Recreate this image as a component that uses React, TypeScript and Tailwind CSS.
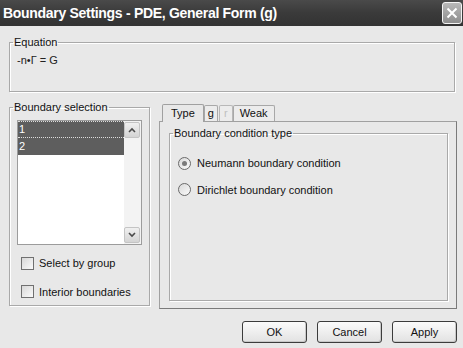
import React from "react";

const ui = { fontFamily: '"Liberation Sans", Arial, sans-serif' };

function Group({
  label,
  className,
  children,
}: {
  label: string;
  className?: string;
  children?: React.ReactNode;
}) {
  return (
    <fieldset
      className={`border border-[#a9a9a9] shadow-[1px_1px_0_#fff,inset_1px_1px_0_#fff] px-[7px] ${className ?? ""}`}
    >
      <legend className="ml-[-4px] px-[1px] text-[11px] leading-[13px] text-[#111]">
        {label}
      </legend>
      {children}
    </fieldset>
  );
}

function CheckBox({ label }: { label: string }) {
  return (
    <div className="flex items-center gap-[5px] text-[11px] text-[#111]">
      <span className="h-[13px] w-[13px] border border-[#707070] bg-gradient-to-br from-[#d8d8d8] to-[#fafafa]" />
      {label}
    </div>
  );
}

function Radio({ label, checked }: { label: string; checked?: boolean }) {
  return (
    <div className="flex items-center gap-[6px] text-[11px] text-[#111]">
      <span className="flex h-[13px] w-[13px] items-center justify-center rounded-full border border-[#6a6a6a] bg-gradient-to-br from-[#dadada] to-[#fafafa]">
        {checked && <span className="h-[5px] w-[5px] rounded-full bg-[#7a7a7a]" />}
      </span>
      {label}
    </div>
  );
}

function Btn({ label }: { label: string }) {
  return (
    <button className="h-[22px] w-[65px] rounded-[3px] border border-[#3c3c3c] bg-gradient-to-b from-[#fbfbfb] to-[#e2e2e2] text-[11px] text-[#111] shadow-[inset_-1px_-1px_0_#c8c8c8]">
      {label}
    </button>
  );
}

function ScrollArrow({ up }: { up?: boolean }) {
  return (
    <div className="flex h-[16px] w-[16px] items-center justify-center rounded-[2px] border border-[#c4c4c4] bg-gradient-to-b from-[#f0f0f0] to-[#d4d4d4]">
      <svg width="8" height="6" viewBox="0 0 8 6">
        <path
          d={up ? "M1 5 L4 2 L7 5" : "M1 1 L4 4 L7 1"}
          stroke="#4a4a4a"
          strokeWidth="1.6"
          fill="none"
        />
      </svg>
    </div>
  );
}

export default function App() {
  return (
    <div className="h-[348px] w-[463px] overflow-hidden bg-[#e8e8e8]" style={ui}>
      {/* title bar */}
      <div className="flex h-[26px] items-center justify-between bg-gradient-to-b from-[#4a4a4a] via-[#3a3a3a] to-[#333] pl-[3px] pr-[1px]">
        <span className="text-[14px] font-bold tracking-[-0.3px] text-white">
          Boundary Settings - PDE, General Form (g)
        </span>
        <div className="flex h-[22px] w-[20px] items-center justify-center rounded-[3px] border border-[#f4f4f4] bg-gradient-to-b from-[#b8b8b8] to-[#8e8e8e]">
          <svg width="12" height="12" viewBox="0 0 12 12">
            <path d="M1.5 1.5 L10.5 10.5 M10.5 1.5 L1.5 10.5" stroke="#fff" strokeWidth="2" />
          </svg>
        </div>
      </div>

      <div className="px-[9px] pt-[10px]">
        <Group label="Equation" className="h-[56px] w-[446px]">
          <div className="mt-[3px] text-[11px] text-[#222]">-n•Γ = G</div>
        </Group>

        <div className="mt-[9px] flex gap-[9px]">
          <Group label="Boundary selection" className="h-[205px] w-[139px]">
            <div className="mt-[6px] flex h-[125px] w-[125px] border border-[#9c9c9c] bg-white">
              <div className="flex-1">
                <div className="h-[17px] border-y border-dotted border-[#ddd] bg-[#5e5e5e] pl-[1px] text-[11px] leading-[15px] text-white">
                  1
                </div>
                <div className="h-[17px] bg-[#5e5e5e] pl-[1px] text-[11px] leading-[17px] text-white">
                  2
                </div>
              </div>
              <div className="flex w-[17px] flex-col justify-between bg-[#f3f3f3] py-[1px]">
                <ScrollArrow up />
                <ScrollArrow />
              </div>
            </div>
            <div className="ml-[4px] mt-[10px] flex flex-col gap-[12px]">
              <CheckBox label="Select by group" />
              <CheckBox label="Interior boundaries" />
            </div>
          </Group>

          <div className="mt-[3px] flex flex-col">
            <div className="ml-[3px] flex items-end text-[11px] text-[#111]">
              <div className="z-10 mb-[-1px] flex h-[18px] items-center rounded-t-[2px] border border-b-0 border-[#a0a0a0] bg-[#e8e8e8] px-[8px]">
                Type
              </div>
              <div className="flex h-[16px] items-center rounded-t-[2px] border border-b-0 border-[#a8a8a8] bg-[#ececec] px-[3px]">
                g
              </div>
              <div className="ml-[1px] flex h-[16px] items-center rounded-t-[2px] border border-b-0 border-[#b8b8b8] bg-[#ececec] px-[4px] text-[#c0c0c0]">
                r
              </div>
              <div className="flex h-[16px] items-center rounded-t-[2px] border border-b-0 border-[#a8a8a8] bg-[#ececec] px-[6px]">
                Weak
              </div>
            </div>
            <div className="h-[188px] w-[298px] border border-[#a0a0a0] border-b-[#7a7a7a] border-r-[#7a7a7a] px-[9px] pt-[5px]">
              <Group label="Boundary condition type" className="h-[174px] w-[279px]">
                <div className="ml-[1px] mt-[15px] flex flex-col gap-[10px]">
                  <Radio label="Neumann boundary condition" checked />
                  <Radio label="Dirichlet boundary condition" />
                </div>
              </Group>
            </div>
          </div>
        </div>

        <div className="mr-[-3px] mt-[12px] flex justify-end gap-[10px]">
          <Btn label="OK" />
          <Btn label="Cancel" />
          <Btn label="Apply" />
        </div>
      </div>
    </div>
  );
}
